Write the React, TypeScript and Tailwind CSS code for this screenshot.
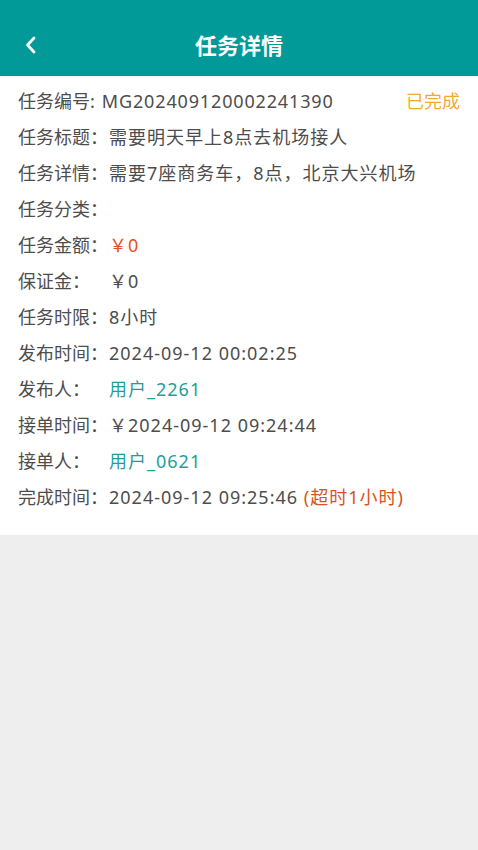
import React from "react";

type Row = {
  label: string;
  value?: React.ReactNode;
};

const FONT = {
  fontFamily: '"Noto Sans", "Noto Sans CJK SC", sans-serif',
};

const TASK_NO = "MG" + "20240912000224139" + "0";

const rows: Row[] = [
  { label: "任务标题：", value: "需要明天早上8点去机场接人" },
  { label: "任务详情：", value: "需要7座商务车，8点，北京大兴机场" },
  { label: "任务分类：" },
  { label: "任务金额：", value: <span className="text-[#e4521f]">￥0</span> },
  { label: "保证金：", value: "￥0" },
  { label: "任务时限：", value: "8小时" },
  { label: "发布时间：", value: "2024-09-12 00:02:25" },
  { label: "发布人：", value: <span className="text-[#1f9f97]">用户_2261</span> },
  { label: "接单时间：", value: "￥2024-09-12 09:24:44" },
  { label: "接单人：", value: <span className="text-[#1f9f97]">用户_0621</span> },
  {
    label: "完成时间：",
    value: (
      <>
        2024-09-12 09:25:46{" "}
        <span className="text-[#d9531f]">(超时1小时)</span>
      </>
    ),
  },
];

function BackIcon() {
  return (
    <svg width="14" height="18" viewBox="0 0 14 18" fill="none">
      <path
        d="M10 2 L3.5 9 L10 16"
        stroke="white"
        strokeWidth="2.8"
        strokeLinecap="round"
        strokeLinejoin="round"
      />
    </svg>
  );
}

export default function App() {
  return (
    <div className="min-h-[850px] bg-[#eeeeee]" style={FONT}>
      {/* Header */}
      <div className="relative flex h-[76px] items-center justify-center bg-[#029a99]">
        <div className="absolute left-[24px] top-[36px]">
          <BackIcon />
        </div>
        <h1 className="pt-[14px] text-[22px] font-semibold text-white">任务详情</h1>
      </div>

      {/* Detail panel */}
      <div className="bg-white px-[18px] pb-[20px] pt-[7px] text-[18px] text-[#4d4d4d]">
        <div className="flex h-[36px] items-center justify-between">
          <span>
            任务编号:
            <span className="ml-[7px] tracking-[0.85px]">{TASK_NO}</span>
          </span>
          <span className="text-[#f2aa2e]">已完成</span>
        </div>
        {rows.map((r) => (
          <div key={r.label} className="flex h-[36px] items-center">
            <span className="w-[91px] shrink-0">{r.label}</span>
            <span className="tracking-[1px]">{r.value}</span>
          </div>
        ))}
      </div>
    </div>
  );
}
